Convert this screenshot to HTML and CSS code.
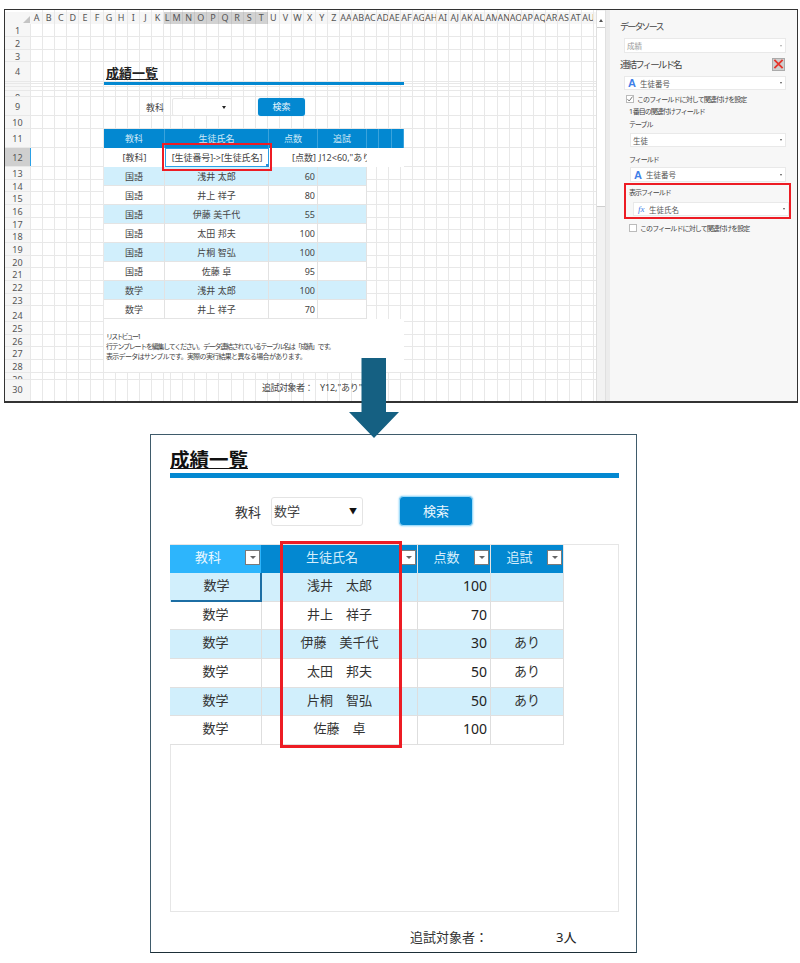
FILE: index.html
```html
<!DOCTYPE html>
<html lang="ja">
<head>
<meta charset="utf-8">
<title>成績一覧</title>
<link rel="stylesheet" href="styles.css">
</head>
<body>
<section class="window">
  <div class="sheet">
    <div class="cols">
      <i></i><i></i><i></i><i></i><i></i><i></i><i></i><i></i><i></i><i></i><i></i><i class="narrow"></i><i></i><i></i><i></i><i></i><i></i><i></i><i></i><i></i><i></i><i></i><i></i><i></i><i></i><i></i><i></i><i></i><i></i><i></i><i></i><i></i><i></i><i></i><i></i><i></i><i></i><i></i><i></i><i></i><i></i><i></i><i></i><i></i><i></i><i></i><i></i>
    </div>
    <div class="colhead">
      <div class="corner"><span class="tri"></span></div>
      <span class="c">A</span><span class="c">B</span><span class="c">C</span><span class="c">D</span><span class="c">E</span><span class="c">F</span><span class="c">G</span><span class="c">H</span><span class="c">I</span><span class="c">J</span><span class="c">K</span><span class="c narrow on">L</span><span class="c on">M</span><span class="c on">N</span><span class="c on">O</span><span class="c on">P</span><span class="c on">Q</span><span class="c on">R</span><span class="c on">S</span><span class="c on">T</span><span class="c">U</span><span class="c">V</span><span class="c">W</span><span class="c">X</span><span class="c">Y</span><span class="c">Z</span><span class="c">AA</span><span class="c">AB</span><span class="c">AC</span><span class="c">AD</span><span class="c">AE</span><span class="c">AF</span><span class="c">AG</span><span class="c">AH</span><span class="c">AI</span><span class="c">AJ</span><span class="c">AK</span><span class="c">AL</span><span class="c">AM</span><span class="c">AN</span><span class="c">AO</span><span class="c">AP</span><span class="c">AQ</span><span class="c">AR</span><span class="c">AS</span><span class="c">AT</span><span class="c">AU</span>
    </div>
    <div class="r h13"><span class="n">1</span></div>
    <div class="r h13"><span class="n">2</span></div>
    <div class="r h12"><span class="n">3</span></div>
    <div class="r h20"><span class="n">4</span></div>
    <div class="r h2"><span class="n">5</span></div>
    <div class="r h3"><span class="n">6</span></div>
    <div class="r h4"><span class="n">7</span></div>
    <div class="r h6"><span class="n">8</span></div>
    <div class="r h19"><span class="n">9</span></div>
    <div class="r h13"><span class="n">10</span></div>
    <div class="r h19"><span class="n">11</span></div>
    <div class="r h19"><span class="n cur-row">12</span></div>
    <div class="r h13"><span class="n">13</span></div>
    <div class="r h12"><span class="n">14</span></div>
    <div class="r h13"><span class="n">15</span></div>
    <div class="r h13"><span class="n">16</span></div>
    <div class="r h12"><span class="n">17</span></div>
    <div class="r h13"><span class="n">18</span></div>
    <div class="r h13"><span class="n">19</span></div>
    <div class="r h12"><span class="n">20</span></div>
    <div class="r h13"><span class="n">21</span></div>
    <div class="r h13"><span class="n">22</span></div>
    <div class="r h12"><span class="n">23</span></div>
    <div class="r h16"><span class="n">24</span></div>
    <div class="r h13"><span class="n">25</span></div>
    <div class="r h12"><span class="n">26</span></div>
    <div class="r h13"><span class="n">27</span></div>
    <div class="r h12"><span class="n">28</span></div>
    <div class="r h7"><span class="n">29</span></div>
    <div class="r h22"><span class="n">30</span></div>
    <div class="r h13"><span class="n">31</span></div>

    <div class="design">
      <div class="d-title">成績一覧</div>
      <div class="d-bar"></div>
      <div class="d-search">
        <span class="d-label">教科</span>
        <span class="d-select"><span class="d-caret"></span></span>
        <span class="d-btn">検索</span>
      </div>
      <div class="d-grid d-head">
        <span>教科</span><span>生徒氏名</span><span>点数</span><span>追試</span><span></span><span></span><span></span>
      </div>
      <div class="d-grid d-tpl">
        <span>[教科]</span><span class="d-sel">[生徒番号]-&gt;[生徒氏名]<i class="handle"></i></span><span class="num">[点数]</span><span class="clip">J12&lt;60,"あり"</span>
      </div>
      <div class="d-grid d-row blue"><span>国語</span><span>浅井 太郎</span><span class="num">60</span><span></span></div>
      <div class="d-grid d-row"><span>国語</span><span>井上 祥子</span><span class="num">80</span><span></span></div>
      <div class="d-grid d-row blue"><span>国語</span><span>伊藤 美千代</span><span class="num">55</span><span></span></div>
      <div class="d-grid d-row"><span>国語</span><span>太田 邦夫</span><span class="num">100</span><span></span></div>
      <div class="d-grid d-row blue"><span>国語</span><span>片桐 智弘</span><span class="num">100</span><span></span></div>
      <div class="d-grid d-row"><span>国語</span><span>佐藤 卓</span><span class="num">95</span><span></span></div>
      <div class="d-grid d-row blue"><span>数学</span><span>浅井 太郎</span><span class="num">100</span><span></span></div>
      <div class="d-grid d-row"><span>数学</span><span>井上 祥子</span><span class="num">70</span><span></span></div>
      <div class="d-notes">
        <div class="n1">リストビュー1</div>
        <div class="n2">行テンプレートを編集してください。データ連結されているテーブル名は「成績」です。</div>
        <div class="n3">表示データはサンプルです。実際の実行結果と異なる場合があります。</div>
      </div>
      <div class="d-foot"><span>追試対象者：</span><span class="d-foot-val">Y12,"あり"</span></div>
      <div class="d-red"></div>
    </div>
  </div>

  <div class="scroll">
    <div class="sb-up"><i></i></div>
    <div class="sb-thumb"></div>
  </div>
  <div class="split"></div>

  <aside class="panel">
    <div class="p-h">データソース</div>
    <div class="sel s-a s-15 muted">成績<i></i></div>
    <div class="p-link">
      <span class="p-h2">連結フィールド名</span>
      <span class="x-btn"><svg viewBox="0 0 12 12" width="12" height="12"><path d="M1.5 1.5 10.5 10.5M10.5 1.5 1.5 10.5" stroke="#e5352b" stroke-width="2" fill="none"/></svg></span>
    </div>
    <div class="sel s-a s-14 m5"><b class="ico-a">A</b>生徒番号<i></i></div>
    <label class="chk c1"><span class="box"><svg viewBox="0 0 8 8" width="8" height="8"><path d="M1.5 4.2 3.2 6 6.5 1.6" stroke="#777" stroke-width="1" fill="none"/></svg></span>このフィールドに対して関連付けを設定</label>
    <div class="p-t t1">1 番目の関連付けフィールド</div>
    <div class="p-t t1">テーブル</div>
    <div class="sel s-b s-14 m3">生徒<i></i></div>
    <div class="p-t t8">フィールド</div>
    <div class="sel s-b s-15 m2"><b class="ico-a">A</b>生徒番号<i></i></div>
    <div class="redbox">
      <div class="p-t">表示フィールド</div>
      <div class="sel s-c s-14"><em class="ico-fx">fx</em>生徒氏名<i></i></div>
    </div>
    <label class="chk c2"><span class="box"></span>このフィールドに対して関連付けを設定</label>
  </aside>
</section>

<svg class="arrow" viewBox="0 0 50 80" width="50" height="80"><polygon points="12.5,0 37,0 37,54 50,54 25,80 0,54 12.5,54" fill="#156082"/></svg>

<section class="app">
  <h1 class="title">成績一覧</h1>
  <div class="bar"></div>
  <div class="search">
    <span class="label">教科</span>
    <span class="select">数学<span class="caret">▼</span></span>
    <span class="btn">検索</span>
  </div>
  <div class="list">
    <div class="grid head">
      <div class="th active">教科<span class="fb"></span></div>
      <div class="th">生徒氏名<span class="fb"></span></div>
      <div class="th">点数<span class="fb"></span></div>
      <div class="th">追試<span class="fb"></span></div>
    </div>
    <div class="grid row blue"><div class="td cur">数学</div><div class="td">浅井　太郎</div><div class="td num">100</div><div class="td"></div></div>
    <div class="grid row"><div class="td">数学</div><div class="td">井上　祥子</div><div class="td num">70</div><div class="td"></div></div>
    <div class="grid row blue"><div class="td">数学</div><div class="td">伊藤　美千代</div><div class="td num">30</div><div class="td">あり</div></div>
    <div class="grid row"><div class="td">数学</div><div class="td">太田　邦夫</div><div class="td num">50</div><div class="td">あり</div></div>
    <div class="grid row blue"><div class="td">数学</div><div class="td">片桐　智弘</div><div class="td num">50</div><div class="td">あり</div></div>
    <div class="grid row"><div class="td">数学</div><div class="td">佐藤　卓</div><div class="td num">100</div><div class="td"></div></div>
    <div class="list-red"></div>
  </div>
  <div class="foot"><span>追試対象者：</span><span class="foot-val">3人</span></div>
</section>
</body>
</html>
```

FILE: styles.css
```css
* { box-sizing: border-box; }
html, body { margin: 0; padding: 0; }
body {
  position: relative;
  width: 800px;
  height: 963px;
  overflow: hidden;
  background: #fff;
  color: #333;
  font-family: "Noto Sans", "Noto Sans CJK JP", sans-serif;
}

/* top window */
.window {
  display: flex;
  width: 794px;
  height: 394px;
  margin: 9px 2px 0 4px;
  border: 1px solid #333;
  border-bottom-width: 2px;
  background: #fff;
}
.sheet {
  position: relative;
  flex: none;
  width: 591px;
  height: 391px;
  padding-top: 2px;
  overflow: hidden;
  background: #fff;
}
.cols { position: absolute; left: 26px; top: 0; bottom: 0; display: flex; }
.cols i { flex: none; width: 12.1px; border-right: 1px solid #e8e8e8; }
.cols i.narrow { width: 7px; }
.colhead { position: relative; display: flex; height: 12px; background: #f6f6f6; }
.corner { position: relative; flex: none; width: 26px; background: #f6f6f6; }
.tri {
  position: absolute;
  right: 1px;
  bottom: 1px;
  width: 0;
  height: 0;
  border-left: 7px solid transparent;
  border-bottom: 7px solid #c4c4c4;
}
.c {
  flex: none;
  width: 12.1px;
  overflow: hidden;
  font-size: 9px;
  line-height: 12px;
  text-align: center;
  white-space: nowrap;
  color: #555;
  border-right: 1px solid #e8e8e8;
}
.c.narrow { width: 7px; }
.c.on { background: #d2d2d2; border-right-color: #c4c4c4; }

.r { position: relative; display: flex; border-bottom: 1px solid #e8e8e8; }
.n {
  flex: none;
  width: 26px;
  overflow: hidden;
  background: #f6f6f6;
  font-size: 9px;
  line-height: 13px;
  text-align: center;
  color: #555;
  border-right: 1px solid #e8e8e8;
}
.cur-row { background: #cfcfcf; border-right: 1px solid #2aa0e6; line-height: 18px; }
.h2 { height: 2px; } .h3 { height: 3px; } .h4 { height: 4px; } .h6 { height: 6px; }
.h7 { height: 7px; } .h12 { height: 12.5px; } .h13 { height: 12.75px; } .h16 { height: 16px; }
.h19 { height: 19px; } .h20 { height: 20px; } .h22 { height: 22px; }
.h19 .n, .h20 .n, .h22 .n, .h16 .n { line-height: 19px; }

.design { position: absolute; left: 99px; top: 54px; width: 300px; font-size: 9px; }
.d-title {
  height: 18px;
  padding-left: 2px;
  font-size: 13px;
  line-height: 18px;
  font-weight: 700;
  color: #222;
  text-decoration: underline;
}
.d-bar { height: 3px; background: #0388d1; }
.d-search { display: flex; align-items: center; height: 18px; margin-top: 13px; }
.d-label { width: 26px; margin-left: 42px; color: #444; }
.d-select {
  position: relative;
  width: 60px;
  height: 18px;
  background: #fff;
  border: 1px solid #e8e8e8;
  border-radius: 2px;
}
.d-caret {
  position: absolute;
  right: 5px;
  top: 7px;
  border-left: 2px solid transparent;
  border-right: 2px solid transparent;
  border-top: 3px solid #222;
}
.d-btn {
  width: 47px;
  height: 18px;
  margin-left: 26px;
  border-radius: 3px;
  background: #0388d1;
  box-shadow: 0 0 1px #7cc8f0;
  color: #e8f6fd;
  line-height: 18px;
  text-align: center;
}
.d-grid { display: grid; grid-template-columns: 61px 104px 49px 49px 12px 13px 12px; height: 19px; line-height: 19px; text-align: center; }
.d-head { margin-top: 13px; background: #0388d1; color: #cfe9f7; }
.d-head span { border-right: 1px solid #3aa3dc; }
.d-tpl { background: #fff; color: #444; }
.clip { overflow: hidden; white-space: nowrap; text-align: left; padding-left: 1px; }
.d-sel { position: relative; border: 1px solid #2aa0e6; line-height: 17px; white-space: nowrap; letter-spacing: -.1px; }
.handle { position: absolute; right: -1px; bottom: -1px; width: 3px; height: 3px; background: #2a8fd6; }
.d-row { grid-template-columns: 61px 104px 49px 49px; width: 263px; color: #444; background: #fff; border-bottom: 1px solid #e4e4e4; }
.d-row.blue { background: #d1effc; }
.d-row span { border-right: 1px solid #e2e2e2; }
.d-grid .num { text-align: right; padding-right: 2px; }
.d-notes { height: 53px; padding-top: 13px; background: #fff; font-size: 7px; line-height: 10px; color: #444; white-space: nowrap; }
.d-notes div { padding-left: 2px; }
.n1 { letter-spacing: -1.8px; }
.n2 { letter-spacing: -1.25px; }
.n3 { letter-spacing: -.7px; }
.d-foot { display: flex; height: 22px; margin-top: 7px; padding-left: 158px; line-height: 18px; color: #444; white-space: nowrap; }
.d-foot span:first-child { width: 58px; letter-spacing: -.5px; }
.d-foot-val { letter-spacing: -.1px; }
.d-red { position: absolute; left: 58px; top: 79px; width: 110px; height: 28px; border: 2px solid #ed1c24; }

.scroll { flex: none; width: 10px; background: #f2f2f2; border-left: 1px solid #e0e0e0; border-right: 1px solid #e0e0e0; }
.sb-up { position: relative; height: 17px; border-bottom: 1px solid #ccc; background: #fff; margin-top: 1px; }
.sb-up i {
  position: absolute;
  left: 2px;
  top: 8px;
  border-left: 2px solid transparent;
  border-right: 2px solid transparent;
  border-bottom: 3px solid #555;
}
.sb-thumb { height: 179px; background: #fff; border-bottom: 1px solid #cfcfcf; }
.split { flex: none; width: 4px; background: #ececec; }

/* property panel */
.panel { flex: 1; min-width: 0; padding: 11px 6px 0 10px; background: #f7f7f7; font-size: 7px; color: #444; white-space: nowrap; }
.p-h { height: 12px; font-size: 9px; line-height: 12px; letter-spacing: -1.8px; }
.p-link { display: flex; justify-content: space-between; align-items: center; height: 14px; margin-top: 4px; padding-right: 6px; }
.p-h2 { font-size: 9.5px; letter-spacing: -1.9px; }
.x-btn { display: flex; align-items: center; justify-content: center; width: 13px; height: 13px; background: #cfcfcf; border: 1px solid #aaa; }
.sel {
  position: relative;
  display: flex;
  align-items: center;
  padding-left: 2px;
  background: #fff;
  border: 1px solid #e9e9e9;
  font-size: 7.5px;
  color: #555;
}
.sel i {
  position: absolute;
  right: 3px;
  top: 50%;
  margin-top: -1px;
  border-left: 1.5px solid transparent;
  border-right: 1.5px solid transparent;
  border-top: 2px solid #555;
}
.s-a { width: 162px; margin-left: 4px; margin-top: 5px; }
.s-b { width: 156px; margin-left: 10px; }
.s-c { width: 156px; margin: 4px 0 0 4px; }
.s-14 { height: 14px; }
.s-15 { height: 15px; }
.m5 { margin-top: 5px; }
.m3 { margin-top: 3px; }
.m2 { margin-top: 2px; }
.muted { color: #999; }
.muted i { border-top-color: #aaa; }
.ico-a { width: 12px; padding-left: 1px; margin-right: 1px; font-family: "Liberation Sans", sans-serif; font-size: 11px; font-weight: 700; line-height: 12px; color: #3f7fe8; }
.ico-fx { width: 12px; padding-left: 2px; margin-right: 1px; font-family: "Liberation Serif", serif; font-size: 9px; font-style: italic; color: #3f7fe8; }
.chk { display: flex; align-items: center; height: 10px; font-size: 7px; letter-spacing: -.9px; }
.c1 { margin: 4px 0 0 6px; }
.c2 { margin: 4px 0 0 9px; }
.box { flex: none; width: 8px; height: 8px; margin-right: 3px; background: #fff; border: 1px solid #bbb; letter-spacing: 0; }
.box svg { display: block; margin: -1px; }
.p-t { height: 10px; line-height: 10px; font-size: 7px; letter-spacing: -1px; }
.t1 { margin: 3px 0 0 9px; }
.t8 { margin: 8px 0 0 9px; }
.redbox { width: 167px; height: 36px; margin: 1px 0 0 4px; padding: 3px 0 0 3px; border: 2px solid #ed1c24; }

/* arrow */
.arrow { position: absolute; left: 349px; top: 358px; z-index: 5; display: block; }

/* bottom app */
.app {
  width: 487px;
  height: 519px;
  margin: 31px 0 0 150px;
  padding: 12px 17px 0 19px;
  border: 1px solid #3f5b6b;
  border-bottom-color: #1d2f38;
  background: #fff;
}
.title {
  margin: 0;
  height: 26px;
  font-size: 19.5px;
  line-height: 25px;
  font-weight: 700;
  color: #111;
  text-decoration: underline;
}
.bar { height: 5px; background: #0388d1; }
.search { display: flex; align-items: center; height: 30px; margin-top: 18px; font-size: 13px; }
.label { width: 36px; margin-left: 65px; color: #333; }
.select {
  position: relative;
  width: 92px;
  height: 29px;
  padding-left: 2px;
  border: 1px solid #e4e4e4;
  border-radius: 3px;
  line-height: 26px;
  color: #444;
}
.caret { position: absolute; right: 5px; top: 0; font-size: 8px; color: #111; }
.btn {
  width: 74px;
  height: 30px;
  margin-left: 36px;
  border: 1px solid #9fdcfa;
  border-radius: 4px;
  background: #0388d1;
  box-shadow: 0 0 2px #6cc7f5;
  color: #e9f7fe;
  line-height: 28px;
  text-align: center;
}
.list { position: relative; height: 368px; margin-top: 18px; border: 1px solid #e6e6e6; font-size: 13px; }
.grid { display: grid; grid-template-columns: 92px 156px 73px 73px; width: 394px; margin-left: -1px; }
.head { height: 28px; background: #0388d1; color: #d6eefb; }
.th { position: relative; padding-right: 15px; line-height: 25px; text-align: center; border-right: 1px solid #e6e6e6; }
.th.active { background: #2db5fc; color: #eaf8ff; border-right: 1px solid #0388d1; }
.fb { position: absolute; right: 1px; top: 5px; width: 15px; height: 15px; background: #fff; border: 1px solid #7a7a7a; }
.fb::after {
  content: "";
  position: absolute;
  left: 3.5px;
  top: 5px;
  border-left: 3px solid transparent;
  border-right: 3px solid transparent;
  border-top: 3px solid #666;
}
.row { height: 28.7px; background: #fff; }
.row.blue { background: #d1effc; }
.td { line-height: 25px; text-align: center; border-right: 1px solid #dedede; border-bottom: 1px solid #e0e0e0; word-spacing: -4px; color: #333; }
.td.num { padding-right: 3px; font-size: 14px; text-align: right; color: #222; line-height: 26px; }
.td.cur { box-shadow: inset -2px -2px 0 #1c6ea4; border: 0; margin-left: 1px; }
.list-red { position: absolute; left: 109px; top: -4px; width: 122px; height: 207px; border: 3.5px solid #ed1c24; z-index: 2; }
.foot { display: flex; height: 18px; margin-top: 16px; margin-left: 240px; font-size: 13px; line-height: 18px; color: #333; }
.foot span:first-child { width: 146px; }
.foot-val { color: #222; }
```
